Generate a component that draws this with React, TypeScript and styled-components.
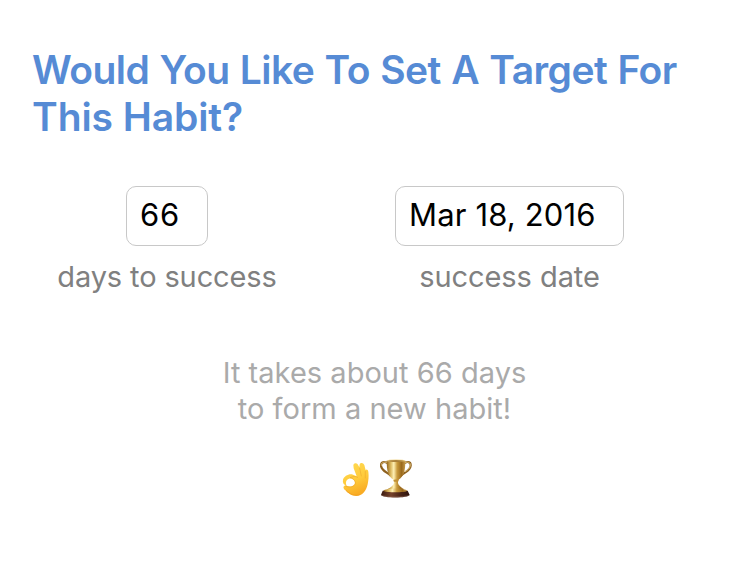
import React from "react";
import styled, { createGlobalStyle } from "styled-components";

const GlobalStyle = createGlobalStyle`
  body {
    margin: 0;
    background: #ffffff;
    font-family: Inter, "Liberation Sans", sans-serif;
    font-weight: 400;
  }
`;

const Page = styled.main`
  box-sizing: border-box;
  width: 749px;
  height: 574px;
  padding: 46px 32px 0;
  overflow: hidden;
`;

const Title = styled.h1`
  margin: 0;
  font-size: 39px;
  font-weight: 560;
  line-height: 47px;
  color: #568bd5;
`;

const TitleLine = styled.span<{ $tracking: number; $gap: number }>`
  display: block;
  white-space: nowrap;
  letter-spacing: ${(p) => p.$tracking}px;
  word-spacing: ${(p) => p.$gap}px;
`;

const Fields = styled.div`
  display: grid;
  grid-template-columns: 270px 415px;
  margin-top: 46px;
`;

const Field = styled.label`
  display: flex;
  flex-direction: column;
  align-items: center;
`;

const ValueBox = styled.div<{ $width: number; $tracking: number }>`
  box-sizing: border-box;
  width: ${(p) => p.$width}px;
  height: 60px;
  padding-left: 13px;
  border: 1px solid #c8c8c8;
  border-radius: 10px;
  font-size: 31px;
  line-height: 56px;
  letter-spacing: ${(p) => p.$tracking}px;
  white-space: nowrap;
  color: #000000;
`;

const Caption = styled.span<{ $tracking: number }>`
  margin-top: 13px;
  font-size: 29px;
  line-height: 36px;
  letter-spacing: ${(p) => p.$tracking}px;
  color: #808080;
`;

const Hint = styled.p`
  margin: 60px 0 0;
  font-size: 29px;
  line-height: 36px;
  letter-spacing: 0.03px;
  text-align: center;
  color: #aaaaaa;
`;

const Emojis = styled.div`
  display: flex;
  align-items: flex-start;
  gap: 11px;
  margin: 32px 0 0 310px;
`;

const HandSvg = styled.svg`
  width: 27px;
  height: 35px;
  margin-top: 3px;
`;

const TrophySvg = styled.svg`
  width: 32px;
  height: 39px;
`;

function OkHand() {
  return (
    <HandSvg viewBox="21 36 81 105" role="img" aria-label="OK hand">
      <defs>
        <linearGradient id="skin" x1="0" y1="0" x2="0.35" y2="1">
          <stop offset="0" stopColor="#ffdc55" />
          <stop offset="0.6" stopColor="#ffcb3b" />
          <stop offset="1" stopColor="#f9ac24" />
        </linearGradient>
      </defs>
      <path
        d="M55 45 C57 38 65 38 68 43 L73 52 L74 43 C76 37 85 37 88 45 L92 61 C93 57 99 58 100 65 C102 80 100 92 98 103 C94 122 82 138 64 138 C50 138 39 130 31 121 C21 113 26 105 34 107 C26 104 22 97 24 89 C27 79 42 70 54 74 L65 79 L56 55 Z"
        fill="url(#skin)"
      />
      <path d="M35 107 C31 99 32 89 42 86 C51 84 60 91 60 99 C58 109 46 112 35 107 Z" fill="#ffffff" />
      <path
        d="M74 55 L79 78 M91 64 L91 84 M68 82 C61 77 53 80 46 83"
        fill="none"
        stroke="#eda52b"
        strokeWidth="1.6"
        strokeLinecap="round"
      />
      <path
        d="M32 109 C46 114 58 110 61 101 C62 92 54 85 46 83"
        fill="none"
        stroke="#eda52b"
        strokeWidth="1.8"
        strokeLinecap="round"
      />
      <path d="M33 121 C45 133 60 139 75 133" fill="none" stroke="#f1a023" strokeWidth="2.5" />
    </HandSvg>
  );
}

function Trophy() {
  return (
    <TrophySvg viewBox="135 27 96 117" role="img" aria-label="Trophy">
      <defs>
        <linearGradient id="gold" x1="0" y1="0" x2="1" y2="0">
          <stop offset="0" stopColor="#94651b" />
          <stop offset="0.22" stopColor="#dcb961" />
          <stop offset="0.38" stopColor="#fff0b4" />
          <stop offset="0.56" stopColor="#c99a3c" />
          <stop offset="0.8" stopColor="#9a691d" />
          <stop offset="1" stopColor="#c59a49" />
        </linearGradient>
        <linearGradient id="wood" x1="0" y1="0" x2="1" y2="0">
          <stop offset="0" stopColor="#3a1a10" />
          <stop offset="0.35" stopColor="#76422b" />
          <stop offset="0.65" stopColor="#4d2618" />
          <stop offset="1" stopColor="#2d130c" />
        </linearGradient>
      </defs>
      <path
        d="M161 42 C150 32 137 35 138 47 C139 62 155 66 167 77 M205 42 C216 32 228 35 227 47 C226 62 210 66 198 77"
        fill="none"
        stroke="#8e611f"
        strokeWidth="6.5"
      />
      <path
        d="M160 41 C150 33 138 36 139 47 M206 41 C216 33 227 36 226 46 C225 55 217 61 210 65"
        fill="none"
        stroke="#e1c27a"
        strokeWidth="3"
      />
      <path d="M155 32 C155 62 159 79 176 89 H190 C207 79 211 62 211 32 Z" fill="url(#gold)" />
      <ellipse cx="183" cy="32" rx="28" ry="3.5" fill="#f0d58d" />
      <ellipse cx="183" cy="33" rx="24" ry="2" fill="#956822" />
      <path d="M174 86 H192 L189 94 C188 104 193 109 208 118 H157 C173 109 178 104 177 94 Z" fill="url(#gold)" />
      <ellipse cx="183" cy="92" rx="8" ry="3.5" fill="#c19137" />
      <path d="M143 122 H218 L224 135 C220 145 142 145 138 135 Z" fill="url(#wood)" />
      <path d="M145 122 C152 113 210 113 217 122 C210 128 152 128 145 122 Z" fill="url(#gold)" />
      <path d="M140 136 C154 142 208 142 222 136" fill="none" stroke="#8c6252" strokeWidth="1.5" />
    </TrophySvg>
  );
}

export default function App() {
  return (
    <>
      <GlobalStyle />
      <Page>
        <Title>
          <TitleLine $tracking={-0.56} $gap={1.1}>Would You Like To Set A Target For</TitleLine>
          <TitleLine $tracking={-0.1} $gap={0.1}>This Habit?</TitleLine>
        </Title>
        <Fields>
          <Field>
            <ValueBox $width={82} $tracking={0.8}>66</ValueBox>
            <Caption $tracking={-0.12}>days to success</Caption>
          </Field>
          <Field>
            <ValueBox $width={229} $tracking={0.15}>Mar 18, 2016</ValueBox>
            <Caption $tracking={-0.06}>success date</Caption>
          </Field>
        </Fields>
        <Hint>
          It takes about 66 days
          <br />
          to form a new habit!
        </Hint>
        <Emojis>
          <OkHand />
          <Trophy />
        </Emojis>
      </Page>
    </>
  );
}
